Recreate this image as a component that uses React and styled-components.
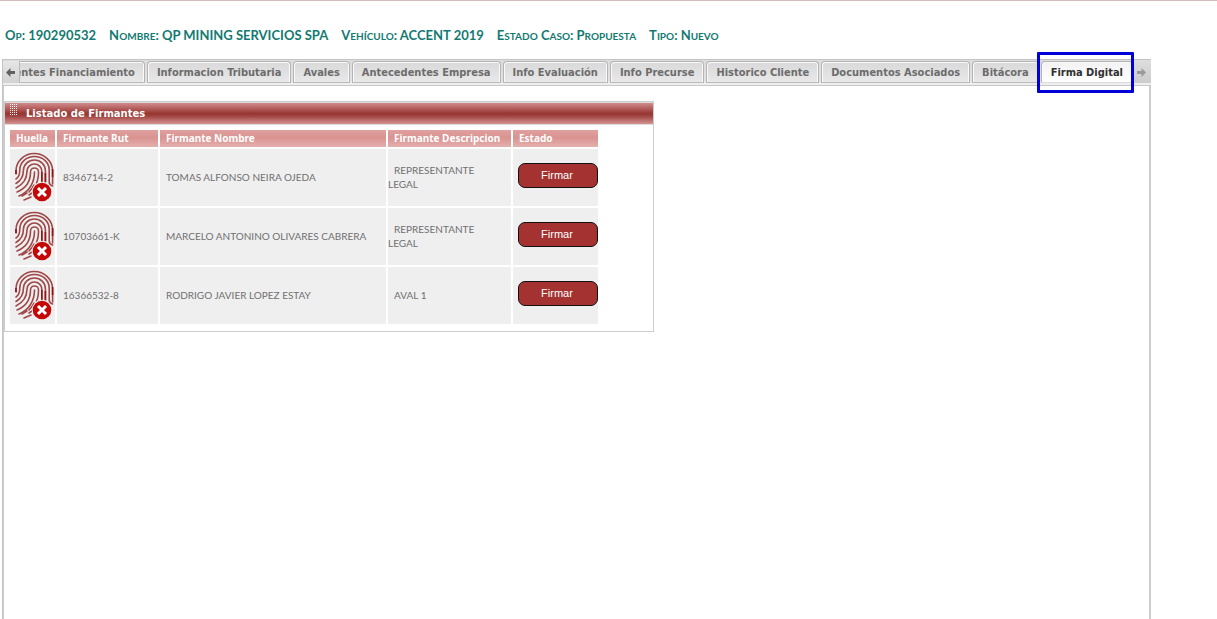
import React from "react";
import styled, { createGlobalStyle, css } from "styled-components";

const Global = createGlobalStyle`
  *, *::before, *::after { box-sizing: border-box; }
  body { margin: 0; background: #fff; color: #6f6f6f; font: 12px/14px "Noto Sans", sans-serif; }
`;

const Page = styled.div`
  display: flex;
  flex-direction: column;
  min-height: 100vh;
  padding: 25px 66px 0 2px;
  border-top: 1px solid #d3bcbc;
`;

const CaseSummary = styled.header`
  display: flex;
  gap: 13px;
  padding: 0 3px;
  color: #127a72;
  font: bold 13px/18px Lato, sans-serif;
  white-space: nowrap;
`;

const SmallCaps = styled.span`
  font-size: 10px;
  line-height: 10px;
  text-transform: uppercase;
`;

const Main = styled.main`
  flex: 1;
  display: flex;
  flex-direction: column;
  margin-top: 15px;
  border: 1px solid #c4c4c4;
  border-width: 1px 2px 0 1px;
  border-right-color: #ccc;
`;

const TabBar = styled.nav`
  display: flex;
  height: 26px;
  padding-top: 1px;
  background: linear-gradient(#dcdcdc, #e4e4e4 22px, #eee 22px);
  border-bottom: 1px solid #c8c8c8;
  margin-right: -2px;
`;

const ScrollButton = styled.button`
  display: flex;
  align-items: center;
  justify-content: center;
  flex: none;
  width: 17px;
  height: 22px;
  padding: 0 2px 0 0;
  border: 0;
  border-right: 1px solid #b8b8b8;
  background: linear-gradient(#e6e6e6, #d2d2d2);
  color: #606060;
  ${(p) => p.$end && css`
    border-right: 0;
    color: #9a9a9a;
    background: linear-gradient(#ddd, #ccc);
  `}
`;

const TabView = styled.div`
  flex: 1;
  min-width: 0;
  display: flex;
  justify-content: flex-end;
  gap: 2px;
  padding-right: 1px;
  overflow-x: clip;
  overflow-y: visible;
`;

const Tab = styled.button`
  position: relative;
  flex: none;
  height: 22px;
  padding: 1px 9px 0;
  border: 1px solid #b4b4b4;
  border-bottom-color: #bcbcbc;
  border-radius: 4px 4px 0 0;
  box-shadow: inset 1px 1px 0 #fafafa, inset -1px 0 0 #fafafa;
  background: linear-gradient(#d9d9d9, #e8e8e8);
  color: #6c6c6c;
  font: bold 11px/19px "DejaVu Sans Condensed", "DejaVu Sans", sans-serif;
  white-space: nowrap;
  ${(p) => p.$active && css`
    background: linear-gradient(#f2f2f2, #fff);
    border-bottom-color: #ddd;
    color: #303030;
    &::after {
      content: "";
      position: absolute;
      inset: -10px -2px -11px -5px;
      border: 3px solid #0000d8;
      border-radius: 1px;
    }
  `}
`;

const Content = styled.div`
  flex: 1;
  padding: 15px 0;
  border-left: 1px solid #ccc;
`;

const Panel = styled.section`
  width: 100%;
  max-width: 650px;
  border: 1px solid #ccc;
`;

const PanelTitle = styled.h2`
  display: flex;
  gap: 8px;
  height: 23px;
  margin: 0;
  padding: 0 5px;
  border-top: 1px solid #ddd;
  border-bottom: 1px solid #ddd;
  background: linear-gradient(#d08b8b, #983632 50%, #a04340 62%, #d49391);
  color: #fff;
  font: bold 10px/21px "DejaVu Sans", sans-serif;
`;

const Table = styled.table`
  width: 592px;
  margin: 3px 3px 5px;
  border-spacing: 2px;
  table-layout: fixed;
`;

const HeadCell = styled.th`
  width: ${(p) => p.$width}px;
  height: 17px;
  padding: 0 0 0 6px;
  background: linear-gradient(#dfa09f, #d99391 45%, #e4b0ae);
  color: #fff;
  font: bold 10px/17px "Noto Sans", sans-serif;
  text-align: left;
  white-space: nowrap;
`;

const Cell = styled.td`
  height: 57px;
  padding: 0 6px 2px 0;
  background: #efefef;
  font: 10px/14px Lato, sans-serif;
  text-indent: 6px;
  vertical-align: middle;
`;

const IconCell = styled(Cell)`
  padding: 0 0 2px 4px;
  text-indent: 0;
  svg { display: block; }
`;

const ActionCell = styled(Cell)`
  padding: 0 0 4px 5px;
  text-indent: 0;
`;

const SignButton = styled.button`
  display: block;
  width: 80px;
  height: 25px;
  padding: 0 2px 1px 0;
  border: 1px solid #111;
  border-radius: 7px;
  background: #a33230;
  color: #fff;
  font: 11px/22px "Liberation Sans", Arial, sans-serif;
  text-align: center;
`;

const Arrow = ({ left }) => (
  <svg width="9" height="9" viewBox="0 0 9 9" fill="currentColor" aria-hidden="true">
    <path d={left ? "M0 4.5 4.5 0v3H9v3H4.500v3z" : "M9 4.5 4.500 0v3H0v3h4.500v3z"} />
  </svg>
);

const GripSvg = styled.svg`
  flex: none;
  margin-top: 1px;
`;

const Grip = () => (
  <GripSvg width="8" height="12" viewBox="0 0 8 12" shapeRendering="crispEdges" aria-hidden="true">
    {[0, 2, 4, 6, 8, 10].map((y) => (
      <path key={y} d={`M0 ${y}h1v1h-1zM2 ${y}h1v1h-1zM4 ${y}h1v1h-1zM6 ${y}h1v1h-1z`} fill="#fbeeee" />
    ))}
  </GripSvg>
);

const Fingerprint = () => (
  <svg width="41" height="50" viewBox="0 0 41 50" role="img" aria-label="Huella pendiente">
    <g fill="none" stroke="#a04848" strokeWidth="1.6" strokeLinecap="round">
      <path d="M2 22v-3a18.300 17.500 0 0 1 36.600 0v13" />
      <path d="M2 27c3-2 3.800-5 3.800-9a14.700 13.500 0 0 1 29.400 0v12q0 3 3.400 4" />
      <path d="M2 31.500c5-3 7.400-7 7.400-13a11 10.500 0 0 1 22 0v13" />
      <path d="M2 36c8-4 11-9.500 11-17a7.400 7 0 0 1 14.800 0v11" />
      <path d="M3 40c10-4 13.500-11 13.500-20a4 4 0 0 1 8 0c0 5-.5 8-2 11" />
      <path d="M20.500 20c0 10-5 20-15.500 24" />
      <path d="M20 33q-2 4-5 7M13 41l-5 3M18 41l-3 2M17 45l-7 3" />
    </g>
    <path d="M2 18v4M38.600 17v8M27.800 20v10M31.400 21v9" stroke="#941414" strokeWidth="1.600" fill="none" />
    <circle cx="28" cy="40" r="10.300" fill="#efefef" />
    <circle cx="28" cy="40" r="9.300" fill="#c40808" />
    <path d="m24 36 8 8m0-8-8 8" stroke="#fff" strokeWidth="3" />
  </svg>
);

const summary = [
  "Op: 190290532",
  "Nombre: QP MINING SERVICIOS SPA",
  "Vehículo: ACCENT 2019",
  "Estado Caso: Propuesta",
  "Tipo: Nuevo",
];

const tabs = [
  "Antecedentes Financiamiento",
  "Informacion Tributaria",
  "Avales",
  "Antecedentes Empresa",
  "Info Evaluación",
  "Info Precurse",
  "Historico Cliente",
  "Documentos Asociados",
  "Bitácora",
  "Firma Digital",
];

const columns = [
  ["Huella", 45],
  ["Firmante Rut", 101],
  ["Firmante Nombre", 226],
  ["Firmante Descripcion", 123],
  ["Estado", 85],
];

const signers = [
  ["8346714-2", "TOMAS ALFONSO NEIRA OJEDA", "REPRESENTANTE LEGAL"],
  ["10703661-K", "MARCELO ANTONINO OLIVARES CABRERA", "REPRESENTANTE LEGAL"],
  ["16366532-8", "RODRIGO JAVIER LOPEZ ESTAY", "AVAL 1"],
];

const SummaryItem = ({ text }) => (
  <span>
    {text.split(/([a-zí]+)/).map((part, i) => (i % 2 ? <SmallCaps key={i}>{part}</SmallCaps> : part))}
  </span>
);

export default function App() {
  return (
    <>
      <Global />
      <Page>
        <CaseSummary>
          {summary.map((s) => <SummaryItem key={s} text={s} />)}
        </CaseSummary>
        <Main>
          <TabBar>
            <ScrollButton aria-label="Anterior"><Arrow left /></ScrollButton>
            <TabView>
              {tabs.map((t) => <Tab key={t} $active={t === "Firma Digital"}>{t}</Tab>)}
            </TabView>
            <ScrollButton $end aria-label="Siguiente"><Arrow /></ScrollButton>
          </TabBar>
          <Content>
            <Panel>
              <PanelTitle><Grip />Listado de Firmantes</PanelTitle>
              <Table>
                <thead>
                  <tr>{columns.map(([c, w]) => <HeadCell key={c} $width={w}>{c}</HeadCell>)}</tr>
                </thead>
                <tbody>
                  {signers.map(([rut, name, role]) => (
                    <tr key={rut}>
                      <IconCell><Fingerprint /></IconCell>
                      <Cell>{rut}</Cell>
                      <Cell>{name}</Cell>
                      <Cell>{role}</Cell>
                      <ActionCell><SignButton>Firmar</SignButton></ActionCell>
                    </tr>
                  ))}
                </tbody>
              </Table>
            </Panel>
          </Content>
        </Main>
      </Page>
    </>
  );
}
